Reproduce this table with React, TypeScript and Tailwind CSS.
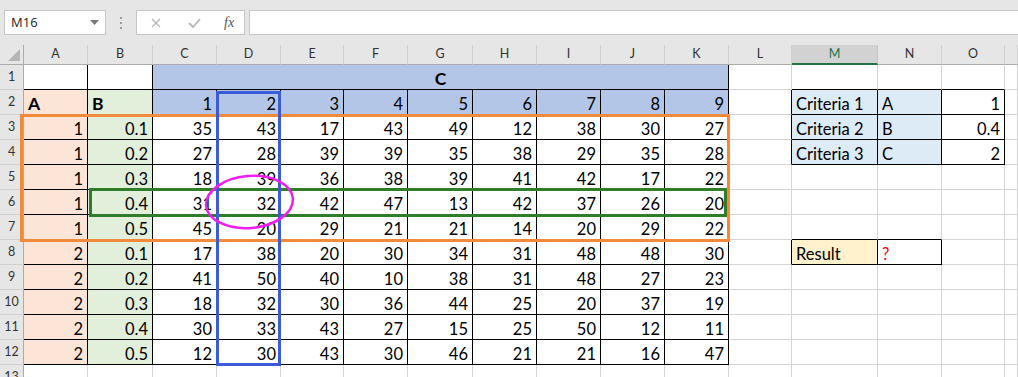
import React from "react";

const cols = ["A", "B", "C", "D", "E", "F", "G", "H", "I", "J", "K", "L", "M", "N", "O", ""];

const values: number[][] = [
  [35, 43, 17, 43, 49, 12, 38, 30, 27],
  [27, 28, 39, 39, 35, 38, 29, 35, 28],
  [18, 39, 36, 38, 39, 41, 42, 17, 22],
  [31, 32, 42, 47, 13, 42, 37, 26, 20],
  [45, 20, 29, 21, 21, 14, 20, 29, 22],
  [17, 38, 20, 30, 34, 31, 48, 48, 30],
  [41, 50, 40, 10, 38, 31, 48, 27, 23],
  [18, 32, 30, 36, 44, 25, 20, 37, 19],
  [30, 33, 43, 27, 15, 25, 50, 12, 11],
  [12, 30, 43, 30, 46, 21, 21, 16, 47],
];

const criteria: [string, string, string][] = [
  ["Criteria 1", "A", "1"],
  ["Criteria 2", "B", "0.4"],
  ["Criteria 3", "C", "2"],
];

type Cell = { text?: string; right?: boolean; bold?: boolean; fill?: string; red?: boolean };

// which cells sit inside a bordered block
const boxed = (r: number, c: number) =>
  (r >= 1 && r <= 12 && c <= 10) ||
  (r >= 2 && r <= 4 && c >= 12 && c <= 14) ||
  (r === 8 && (c === 12 || c === 13));

const getCell = (r: number, c: number): Cell => {
  if (c === 0 && r >= 2 && r <= 12) {
    return r === 2
      ? { text: "A", bold: true, fill: "bg-[#fce4d6]" }
      : { text: r <= 7 ? "1" : "2", right: true, fill: "bg-[#fce4d6]" };
  }
  if (c === 1 && r >= 2 && r <= 12) {
    return r === 2
      ? { text: "B", bold: true, fill: "bg-[#e2efda]" }
      : { text: "0." + (((r - 3) % 5) + 1), right: true, fill: "bg-[#e2efda]" };
  }
  if (c >= 2 && c <= 10) {
    if (r === 2) return { text: String(c - 1), right: true, fill: "bg-[#b4c6e7]" };
    if (r >= 3 && r <= 12) return { text: String(values[r - 3][c - 2]), right: true };
  }
  if (r >= 2 && r <= 4 && c >= 12 && c <= 14) {
    const row = criteria[r - 2];
    if (c === 14) return { text: row[2], right: true };
    return { text: row[c - 12], fill: "bg-[#ddebf7]" };
  }
  if (r === 8 && c === 12) return { text: "Result", fill: "bg-[#fff2cc]" };
  if (r === 8 && c === 13) return { text: "?", red: true };
  return {};
};

const SheetCell = ({ r, c }: { r: number; c: number }) => {
  const cell = getCell(r, c);
  const rightBlack = boxed(r, c) || boxed(r, c + 1);
  const bottomBlack = boxed(r, c) || boxed(r + 1, c);
  return (
    <div
      className={[
        "flex items-end border-r border-b pb-[2px] leading-none overflow-hidden whitespace-nowrap",
        rightBlack ? "border-r-black" : "border-r-[#d4d4d4]",
        bottomBlack ? "border-b-black" : "border-b-[#d4d4d4]",
        cell.right ? "justify-end pr-[4px]" : "justify-start pl-[4px]",
        cell.fill ?? "bg-white",
        cell.bold ? "font-bold text-[17.5px]" : "",
        cell.red ? "text-[#ff0000]" : "text-black",
      ].join(" ")}
    >
      {cell.text}
    </div>
  );
};

const App = () => {
  return (
    <div className="relative w-[1018px] h-[377px] overflow-hidden bg-white font-['Lato',sans-serif] text-[16.5px]">
      {/* name box + formula bar */}
      <div className="flex items-center h-[45px] bg-[#e6e6e6] pl-[4px]">
        <div className="flex items-center justify-between w-[102px] h-[25px] bg-white border border-[#c6c6c6] pl-[6px] pr-[6px] font-['Open_Sans',sans-serif] text-[13px] text-[#222]">
          <span>M16</span>
          <svg width="9" height="5" viewBox="0 0 9 5">
            <path d="M0 0h9L4.5 5z" fill="#777" />
          </svg>
        </div>
        <div className="flex flex-col gap-[3px] w-[30px] items-center">
          <span className="w-[2px] h-[2px] bg-[#9a9a9a]" />
          <span className="w-[2px] h-[2px] bg-[#9a9a9a]" />
          <span className="w-[2px] h-[2px] bg-[#9a9a9a]" />
        </div>
        <div className="flex items-center w-[109px] h-[25px] bg-white border border-[#c6c6c6]">
          <svg className="ml-[14px]" width="10" height="10" viewBox="0 0 10 10">
            <path d="M1 1l8 8M9 1l-8 8" stroke="#b8b8b8" strokeWidth="1.4" />
          </svg>
          <svg className="ml-[27px]" width="13" height="10" viewBox="0 0 13 10">
            <path d="M1 5l4 4 7-8" stroke="#b8b8b8" strokeWidth="1.8" fill="none" />
          </svg>
          <span className="ml-[23px] font-['Liberation_Serif',serif] italic text-[14px] text-[#555]">fx</span>
        </div>
        <div className="ml-[4px] flex-1 h-[25px] bg-white border border-[#c6c6c6] border-r-0" />
      </div>

      {/* worksheet grid */}
      <div className="grid grid-cols-[24px_64px_65px_64px_64px_63px_64px_65px_64px_64px_64px_64px_63px_86px_64px_63px_13px] grid-rows-[20px] auto-rows-[25px]">
        <div className="relative bg-[#e6e6e6] border-r border-b border-r-[#ababab] border-b-[#ababab]">
          <svg className="absolute right-[3px] bottom-[3px]" width="12" height="12" viewBox="0 0 12 12">
            <path d="M12 0v12H0z" fill="#b5b5b5" />
          </svg>
        </div>
        {cols.map((name, i) => (
          <div
            key={"h" + i}
            className={
              name === "M"
                ? "flex items-center justify-center bg-[#d2d2d2] border-r border-r-[#c6c6c6] border-b-2 border-b-[#217346] text-[#217346] text-[12.5px]"
                : "flex items-center justify-center bg-[#e6e6e6] border-r border-r-[#d0d0d0] border-b border-b-[#ababab] text-[#333] text-[12.5px]"
            }
          >
            {name}
          </div>
        ))}

        {Array.from({ length: 13 }, (_, i) => i + 1).map((r) => (
          <React.Fragment key={r}>
            <div className="flex items-center justify-center bg-[#e6e6e6] border-r border-b border-r-[#ababab] border-b-[#d0d0d0] text-[#333] text-[12.5px]">
              {r}
            </div>
            {cols.map((_, c) => {
              if (r === 1 && c === 2) {
                return (
                  <div
                    key={c}
                    className="col-span-9 flex items-end justify-center pb-[2px] leading-none bg-[#b4c6e7] border-r border-b border-r-black border-b-black font-bold text-[17.5px] text-black"
                  >
                    C
                  </div>
                );
              }
              if (r === 1 && c > 2 && c <= 10) return null;
              return <SheetCell key={c} r={r} c={c} />;
            })}
          </React.Fragment>
        ))}
      </div>

      {/* highlight frames drawn over the sheet */}
      <div className="absolute left-[20px] top-[114px] w-[710px] h-[128px] border-[3px] border-[#f28a3c] pointer-events-none" />
      <div className="absolute left-[89px] top-[188px] w-[638px] h-[29px] border-[3px] border-[#2f7d2a] pointer-events-none" />
      <div className="absolute left-[216px] top-[91px] w-[65px] h-[275px] border-[3px] border-[#3b5bd8] pointer-events-none" />
      <svg className="absolute left-[200px] top-[170px] pointer-events-none" width="100" height="65" viewBox="0 0 100 65">
        <ellipse
          cx="49.5"
          cy="32"
          rx="43.5"
          ry="26"
          fill="none"
          stroke="#f01ef0"
          strokeWidth="2.5"
          transform="rotate(-5 49.5 32)"
        />
      </svg>
    </div>
  );
};

export default App;
